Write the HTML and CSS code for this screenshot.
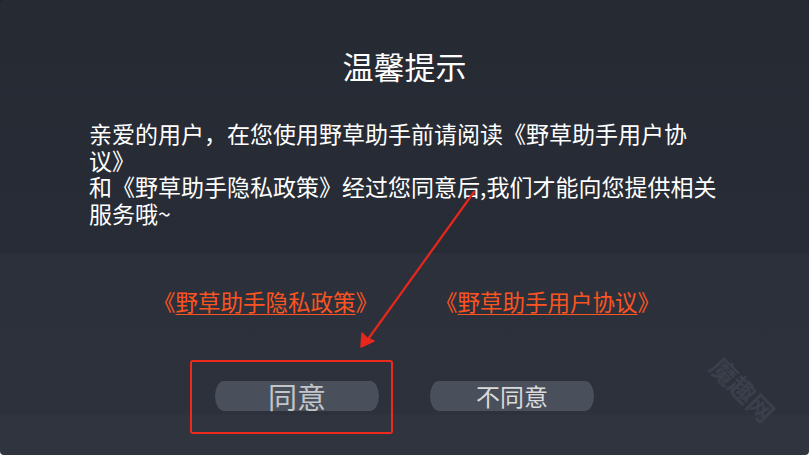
FILE: index.html
```html
<!DOCTYPE html>
<html lang="zh-CN">
<head>
<meta charset="utf-8">
<title>温馨提示</title>
<link rel="stylesheet" href="styles.css">
</head>
<body>
<div class="dialog">
  <h1 class="title">温馨提示</h1>
  <p class="message">亲爱的用户，在您使用野草助手前请阅读《野草助手用户协<br>议》<br>和《野草助手隐私政策》经过您同意后,我们才能向您提供相关<br>服务哦~</p>
  <div class="links">
    <a class="link link-privacy" href="#">《<span class="u">野草助手隐私政策</span>》</a>
    <a class="link link-agreement" href="#">《<span class="u">野草助手用户协议</span>》</a>
  </div>
  <div class="buttons">
    <button class="btn btn-agree">同意</button>
    <button class="btn btn-refuse">不同意</button>
  </div>
  <div class="highlight"></div>
  <svg class="arrow" width="809" height="455" viewBox="0 0 809 455">
    <path d="M474 192 L366 342" stroke="#e8261c" stroke-width="2.2" stroke-linecap="round" fill="none"/>
    <path d="M361 347 L362 333 L367 338 L374 341 Z" fill="#e8261c" stroke="#e8261c" stroke-width="1.5" stroke-linejoin="round"/>
  </svg>
  <div class="watermark">魔趣网</div>
</div>
</body>
</html>
```
FILE: styles.css
```css
html, body {
  margin: 0;
  padding: 0;
}
body {
  width: 809px;
  height: 455px;
  background: linear-gradient(to bottom, #1d2233 0, #1d2233 50%, #ffffff 50%, #ffffff 100%);
  font-family: "Noto Sans CJK SC", "Noto Sans", sans-serif;
  overflow: hidden;
}
.dialog {
  position: relative;
  width: 809px;
  height: 455px;
  border-radius: 4px;
  overflow: hidden;
  display: flex;
  flex-direction: column;
  background: linear-gradient(to bottom,
    #262a33 0, #282c36 253px,
    #2c303b 253px, #2d313c 415px,
    #30343f 415px, #30343f 455px);
}
.title {
  margin: 48px 0 0;
  font-size: 31px;
  line-height: 36px;
  font-weight: normal;
  color: #ffffff;
  text-align: center;
}
.message {
  margin: 36px 0 0;
  padding-left: 89px;
  font-size: 23px;
  line-height: 26.7px;
  color: #ffffff;
  white-space: nowrap;
}
.links {
  margin-top: 60px;
  display: flex;
  padding-left: 153px;
}
.link {
  font-size: 22.5px;
  line-height: 28px;
  color: #fb5420;
  text-decoration: none;
}
.link-privacy {
  width: 282px;
}
.link .u {
  text-decoration: underline;
  text-underline-offset: 3px;
  text-decoration-thickness: 1px;
}
.buttons {
  margin-top: 66px;
  display: flex;
  padding-left: 215px;
  gap: 51px;
}
.btn {
  width: 164px;
  height: 30px;
  border: none;
  padding: 0;
  background: #4a505b;
  border-radius: 9px / 15px;
  font-family: "Noto Sans CJK SC", "Noto Sans", sans-serif;
  display: flex;
  align-items: center;
  justify-content: center;
}
.btn-agree {
  font-size: 29px;
  color: #c3c5c9;
  line-height: 30px;
}
.btn-refuse {
  font-size: 24px;
  color: #dadada;
  line-height: 30px;
}
.highlight {
  position: absolute;
  left: 190px;
  top: 360px;
  width: 199px;
  height: 70px;
  border: 2px solid #ee2a1c;
  border-radius: 3px;
}
.arrow {
  position: absolute;
  left: 0;
  top: 0;
}
.watermark {
  position: absolute;
  left: 704px;
  top: 372px;
  font-size: 26px;
  line-height: 34px;
  font-weight: bold;
  color: #3a3f4b;
  transform: rotate(45deg);
  transform-origin: center;
}
```
